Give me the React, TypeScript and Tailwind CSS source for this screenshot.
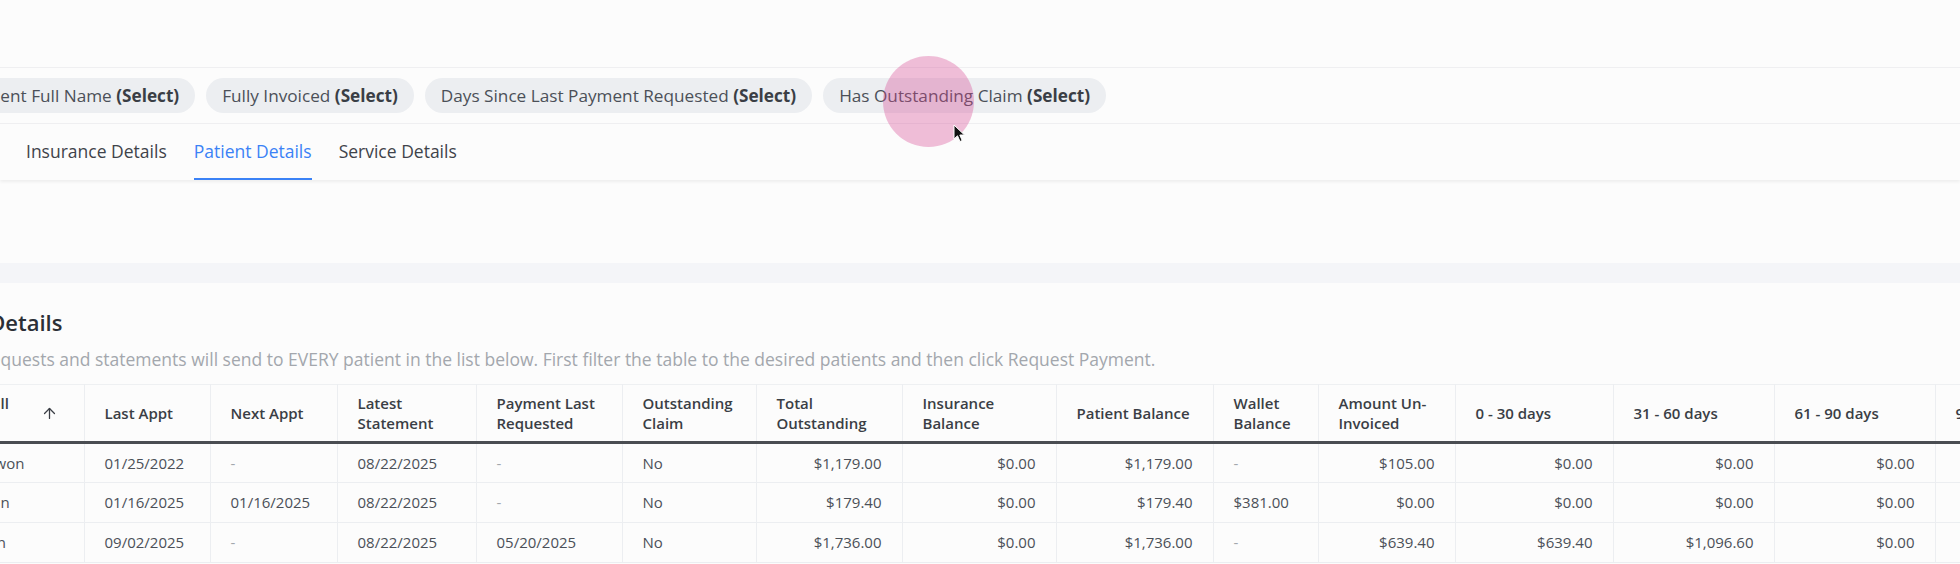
import React from "react";
import { ArrowUp } from "lucide-react";

const filters = [
  "Patient Full Name",
  "Fully Invoiced",
  "Days Since Last Payment Requested",
  "Has Outstanding Claim",
];

const tabs = ["Insurance Details", "Patient Details", "Service Details"];

type Col = { label: string; width: string; right?: boolean };

const columns: Col[] = [
  { label: "Patient Full Name", width: "w-[177px]" },
  { label: "Last Appt", width: "w-[126px]" },
  { label: "Next Appt", width: "w-[127px]" },
  { label: "Latest Statement", width: "w-[139px]" },
  { label: "Payment Last Requested", width: "w-[146px]" },
  { label: "Outstanding Claim", width: "w-[134px]" },
  { label: "Total Outstanding", width: "w-[146px]", right: true },
  { label: "Insurance Balance", width: "w-[154px]", right: true },
  { label: "Patient Balance", width: "w-[157px]", right: true },
  { label: "Wallet Balance", width: "w-[105px]" },
  { label: "Amount Un-Invoiced", width: "w-[137px]", right: true },
  { label: "0 - 30 days", width: "w-[158px]", right: true },
  { label: "31 - 60 days", width: "w-[161px]", right: true },
  { label: "61 - 90 days", width: "w-[161px]", right: true },
  { label: "91 - 120 days", width: "w-[161px]", right: true },
];

const rows = [
  ["Smith, Dewon", "01/25/2022", "-", "08/22/2025", "-", "No", "$1,179.00", "$0.00", "$1,179.00", "-", "$105.00", "$0.00", "$0.00", "$0.00", "$0.00"],
  ["Reyes, Sean", "01/16/2025", "01/16/2025", "08/22/2025", "-", "No", "$179.40", "$0.00", "$179.40", "$381.00", "$0.00", "$0.00", "$0.00", "$0.00", "$0.00"],
  ["Pak, Jordan", "09/02/2025", "-", "08/22/2025", "05/20/2025", "No", "$1,736.00", "$0.00", "$1,736.00", "-", "$639.40", "$639.40", "$1,096.60", "$0.00", "$0.00"],
];

const Cursor = () => (
  <svg width="13" height="19" viewBox="0 0 13 19" className="absolute left-[953px] top-[124px]">
    <path
      d="M1 1 L1 15 L4.5 11.8 L7 17.5 L9.2 16.5 L6.8 11 L11.5 11 Z"
      fill="#111"
      stroke="#fff"
      strokeWidth="1"
      strokeLinejoin="round"
    />
  </svg>
);

const App = () => {
  return (
    <div className="relative min-h-[564px] w-full overflow-hidden bg-[#fcfcfc] font-['Open_Sans',sans-serif]">
      <div className="h-[67px]" />

      {/* filter chips */}
      <div className="flex h-[57px] items-center border-y border-[#efeff1]">
        <div className="-ml-[46px] flex gap-[11px]">
          {filters.map((f) => (
            <span
              key={f}
              className="flex h-[35px] items-center whitespace-nowrap rounded-full bg-[#eceef1] px-4 text-[17.2px] text-[#4b5058]"
            >
              {f}&nbsp;<b className="font-bold text-[#3a3e45]">(Select)</b>
            </span>
          ))}
        </div>
      </div>

      {/* tabs */}
      <div className="relative z-10 flex h-[56px] gap-[27px] pl-[26px] shadow-[0_2px_3px_rgba(0,0,0,0.06)]">
        {tabs.map((t) => (
          <div
            key={t}
            className={
              t === "Patient Details"
                ? "flex items-center border-b-2 border-[#3b82f6] text-[17.5px] text-[#3b82f6]"
                : "flex items-center border-b-2 border-transparent text-[17.5px] text-[#3f434a]"
            }
          >
            {t}
          </div>
        ))}
      </div>

      <div className="h-[83px]" />
      <div className="h-[20px] bg-[#f4f5f8]" />

      {/* details section */}
      <section className="-ml-[93px] pt-[24px]">
        <h2 className="text-[22px] font-semibold leading-[30px] text-[#2b2f36]">Patient Details</h2>
        <p className="mt-[11px] whitespace-nowrap text-[17.5px] leading-[22px] text-[#a3a7ad]">
          Payment requests and statements will send to EVERY patient in the list below. First filter the table to the desired patients and then click Request Payment.
        </p>

        <table className="mt-[14px] w-[2189px] table-fixed border-collapse text-[15px]">
          <thead>
            <tr className="h-[58px] border-t border-b-[3px] border-t-[#eef0f2] border-b-[#4a4d52]">
              {columns.map((c, i) => (
                <th
                  key={c.label}
                  className={
                    i === 0
                      ? `${c.width} border-r border-[#eceef1] pl-5 pr-[26px] text-left align-middle font-semibold leading-[20px] text-[#3a3e45]`
                      : `${c.width} border-r border-[#eceef1] px-5 text-left align-middle font-semibold leading-[20px] text-[#3a3e45]`
                  }
                >
                  {i === 0 ? (
                    <div className="flex items-center justify-between">
                      <span className="w-[96px]">{c.label}</span>
                      <ArrowUp size={17} strokeWidth={1.8} className="text-[#3a3e45]" />
                    </div>
                  ) : (
                    c.label
                  )}
                </th>
              ))}
            </tr>
          </thead>
          <tbody>
            {rows.map((r, ri) => (
              <tr key={ri} className="h-[40px] border-b border-[#eceef1]">
                {r.map((v, ci) => (
                  <td
                    key={ci}
                    className={
                      (columns[ci].right ? "text-right " : "text-left ") +
                      (v === "-" ? "text-[#a3a7ad] " : "text-[#4b5058] ") +
                      "whitespace-nowrap border-r border-[#eceef1] px-5"
                    }
                  >
                    {v}
                  </td>
                ))}
              </tr>
            ))}
          </tbody>
        </table>
      </section>

      {/* click indicator */}
      <div className="absolute left-[883px] top-[56px] h-[91px] w-[91px] rounded-full bg-[rgba(215,72,146,0.35)]" />
      <Cursor />
    </div>
  );
};

export default App;
